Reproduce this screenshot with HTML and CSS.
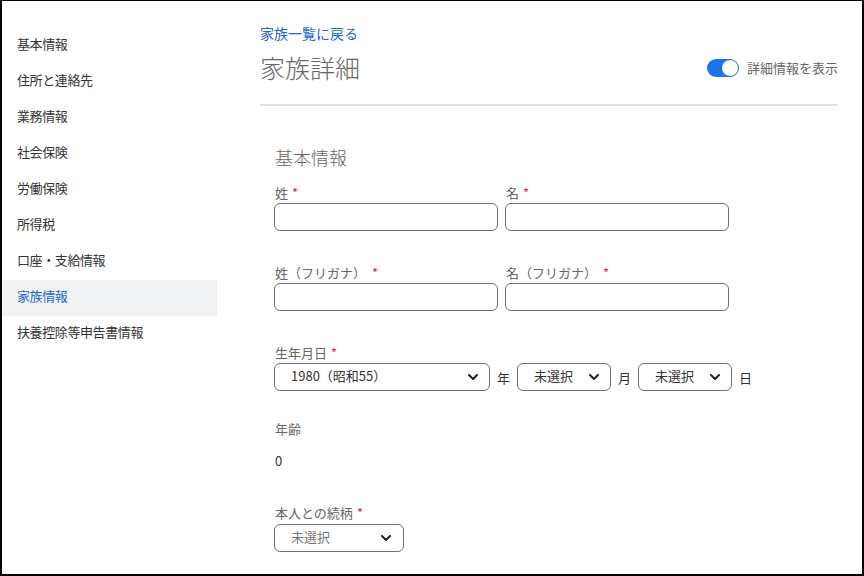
FILE: index.html
```html
<!DOCTYPE html>
<html lang="ja">
<head>
<meta charset="utf-8">
<link rel="stylesheet" href="styles.css">
</head>
<body>
<div class="frame">
  <nav class="sidebar">
    <div class="nav-item">基本情報</div>
    <div class="nav-item">住所と連絡先</div>
    <div class="nav-item">業務情報</div>
    <div class="nav-item">社会保険</div>
    <div class="nav-item">労働保険</div>
    <div class="nav-item">所得税</div>
    <div class="nav-item">口座・支給情報</div>
    <div class="nav-item active">家族情報</div>
    <div class="nav-item">扶養控除等申告書情報</div>
  </nav>
  <main class="main">
    <a class="back-link">家族一覧に戻る</a>
    <div class="header">
      <h1 class="title">家族詳細</h1>
      <div class="toggle-wrap">
        <span class="toggle"><span class="knob"></span></span>
        <span class="toggle-label">詳細情報を表示</span>
      </div>
    </div>
    <div class="divider"></div>
    <section class="form">
      <h2 class="section-title">基本情報</h2>
      <div class="row row-first">
        <div class="field">
          <div class="label">姓<span class="req">*</span></div>
          <div class="input"></div>
        </div>
        <div class="field">
          <div class="label">名<span class="req">*</span></div>
          <div class="input"></div>
        </div>
      </div>
      <div class="row row-gap">
        <div class="field">
          <div class="label">姓（フリガナ）<span class="req req-wide">*</span></div>
          <div class="input"></div>
        </div>
        <div class="field">
          <div class="label">名（フリガナ）<span class="req req-wide">*</span></div>
          <div class="input"></div>
        </div>
      </div>
      <div class="row-gap">
        <div class="label">生年月日<span class="req">*</span></div>
        <div class="date-row">
          <div class="select sel-year"><span>1980（昭和55）</span><svg class="chev" width="10" height="6" viewBox="0 0 10 6"><path d="M1 1l4 4 4-4" fill="none" stroke="#222" stroke-width="2" stroke-linecap="round" stroke-linejoin="round"/></svg></div>
          <span class="unit">年</span>
          <div class="select sel-small"><span>未選択</span><svg class="chev" width="10" height="6" viewBox="0 0 10 6"><path d="M1 1l4 4 4-4" fill="none" stroke="#222" stroke-width="2" stroke-linecap="round" stroke-linejoin="round"/></svg></div>
          <span class="unit">月</span>
          <div class="select sel-small"><span>未選択</span><svg class="chev" width="10" height="6" viewBox="0 0 10 6"><path d="M1 1l4 4 4-4" fill="none" stroke="#222" stroke-width="2" stroke-linecap="round" stroke-linejoin="round"/></svg></div>
          <span class="unit">日</span>
        </div>
      </div>
      <div class="age-block">
        <div class="label">年齢</div>
        <div class="age-value">0</div>
      </div>
      <div class="rel-block">
        <div class="label">本人との続柄<span class="req">*</span></div>
        <div class="select sel-rel placeholder"><span>未選択</span><svg class="chev" width="10" height="6" viewBox="0 0 10 6"><path d="M1 1l4 4 4-4" fill="none" stroke="#222" stroke-width="2" stroke-linecap="round" stroke-linejoin="round"/></svg></div>
      </div>
    </section>
  </main>
</div>
</body>
</html>
```

FILE: styles.css
```css
* { box-sizing: border-box; }
html, body { margin: 0; padding: 0; background: #fff; }
body {
  font-family: "Noto Sans CJK JP", "Noto Sans", sans-serif;
  font-size: 13px;
  color: #333;
}
.frame {
  width: 864px;
  height: 576px;
  border-style: solid;
  border-color: #000;
  border-width: 1px 2px 2px 2px;
  display: flex;
  overflow: hidden;
  background: #fff;
}
.sidebar {
  width: 215px;
  flex: none;
  padding-top: 27px;
}
.nav-item {
  height: 36px;
  line-height: 32px;
  padding-left: 15px;
  font-size: 13px;
  letter-spacing: -0.4px;
  color: #333;
}
.nav-item.active {
  background: #f1f2f4;
  color: #2167d1;
}
.main {
  flex: 1;
  padding: 0 24px 0 43px;
}
.back-link {
  display: block;
  margin-top: 23px;
  line-height: 18px;
  height: 18px;
  font-size: 14px;
  color: #2167d1;
}
.header {
  margin-top: 8px;
  height: 34px;
  display: flex;
  align-items: center;
  justify-content: space-between;
}
.title {
  margin: 0;
  font-size: 25px;
  font-weight: 300;
  line-height: 34px;
  color: #666;
}
.toggle-wrap {
  display: flex;
  align-items: center;
  gap: 8px;
  margin-top: 2px;
}
.toggle {
  width: 32px;
  height: 18px;
  border-radius: 9px;
  background: #1a73e8;
  position: relative;
  display: block;
}
.knob {
  position: absolute;
  right: 1px;
  top: 1px;
  width: 16px;
  height: 16px;
  border-radius: 50%;
  background: #fff;
}
.toggle-label {
  font-size: 13px;
  color: #666;
  line-height: 18px;
}
.divider {
  margin-top: 20px;
  height: 2px;
  background: #dde0e4;
}
.form {
  padding-left: 14px;
}
.section-title {
  margin: 39px 0 0 1px;
  font-size: 18px;
  font-weight: 300;
  line-height: 24px;
  color: #666;
}
.row {
  display: flex;
  gap: 7px;
}
.row-first { margin-top: 15px; }
.row-gap { margin-top: 33px; }
.field { width: 224px; }
.label {
  line-height: 18px;
  height: 18px;
  font-size: 13px;
  color: #666;
  padding-left: 1px;
}
.req { color: #e5195f; margin-left: 4px; }
.req-wide { margin-left: 6px; }
.input {
  margin-top: 1px;
  height: 28px;
  border: 1px solid #6b7079;
  border-radius: 6px;
  background: #fff;
}
.date-row {
  margin-top: 1px;
  display: flex;
  align-items: center;
}
.select {
  height: 28px;
  border: 1px solid #6b7079;
  border-radius: 6px;
  display: flex;
  align-items: center;
  justify-content: space-between;
  padding: 0 11px 0 16px;
  font-size: 13px;
  color: #333;
  background: #fff;
}
.select span { line-height: 18px; margin-top: -2px; }
.chev { flex: none; }
.sel-year { width: 216px; }
.sel-small { width: 94px; }
.unit {
  width: 27px;
  text-align: center;
  font-size: 13px;
  color: #333;
}
.age-block { margin-top: 29px; }
.age-value {
  margin-top: 14px;
  line-height: 18px;
  font-size: 13px;
  color: #333;
  padding-left: 1px;
}
.rel-block { margin-top: 34px; }
.sel-rel {
  width: 130px;
  margin-top: 2px;
  padding-right: 12px;
}
.placeholder { color: #777; }
```
